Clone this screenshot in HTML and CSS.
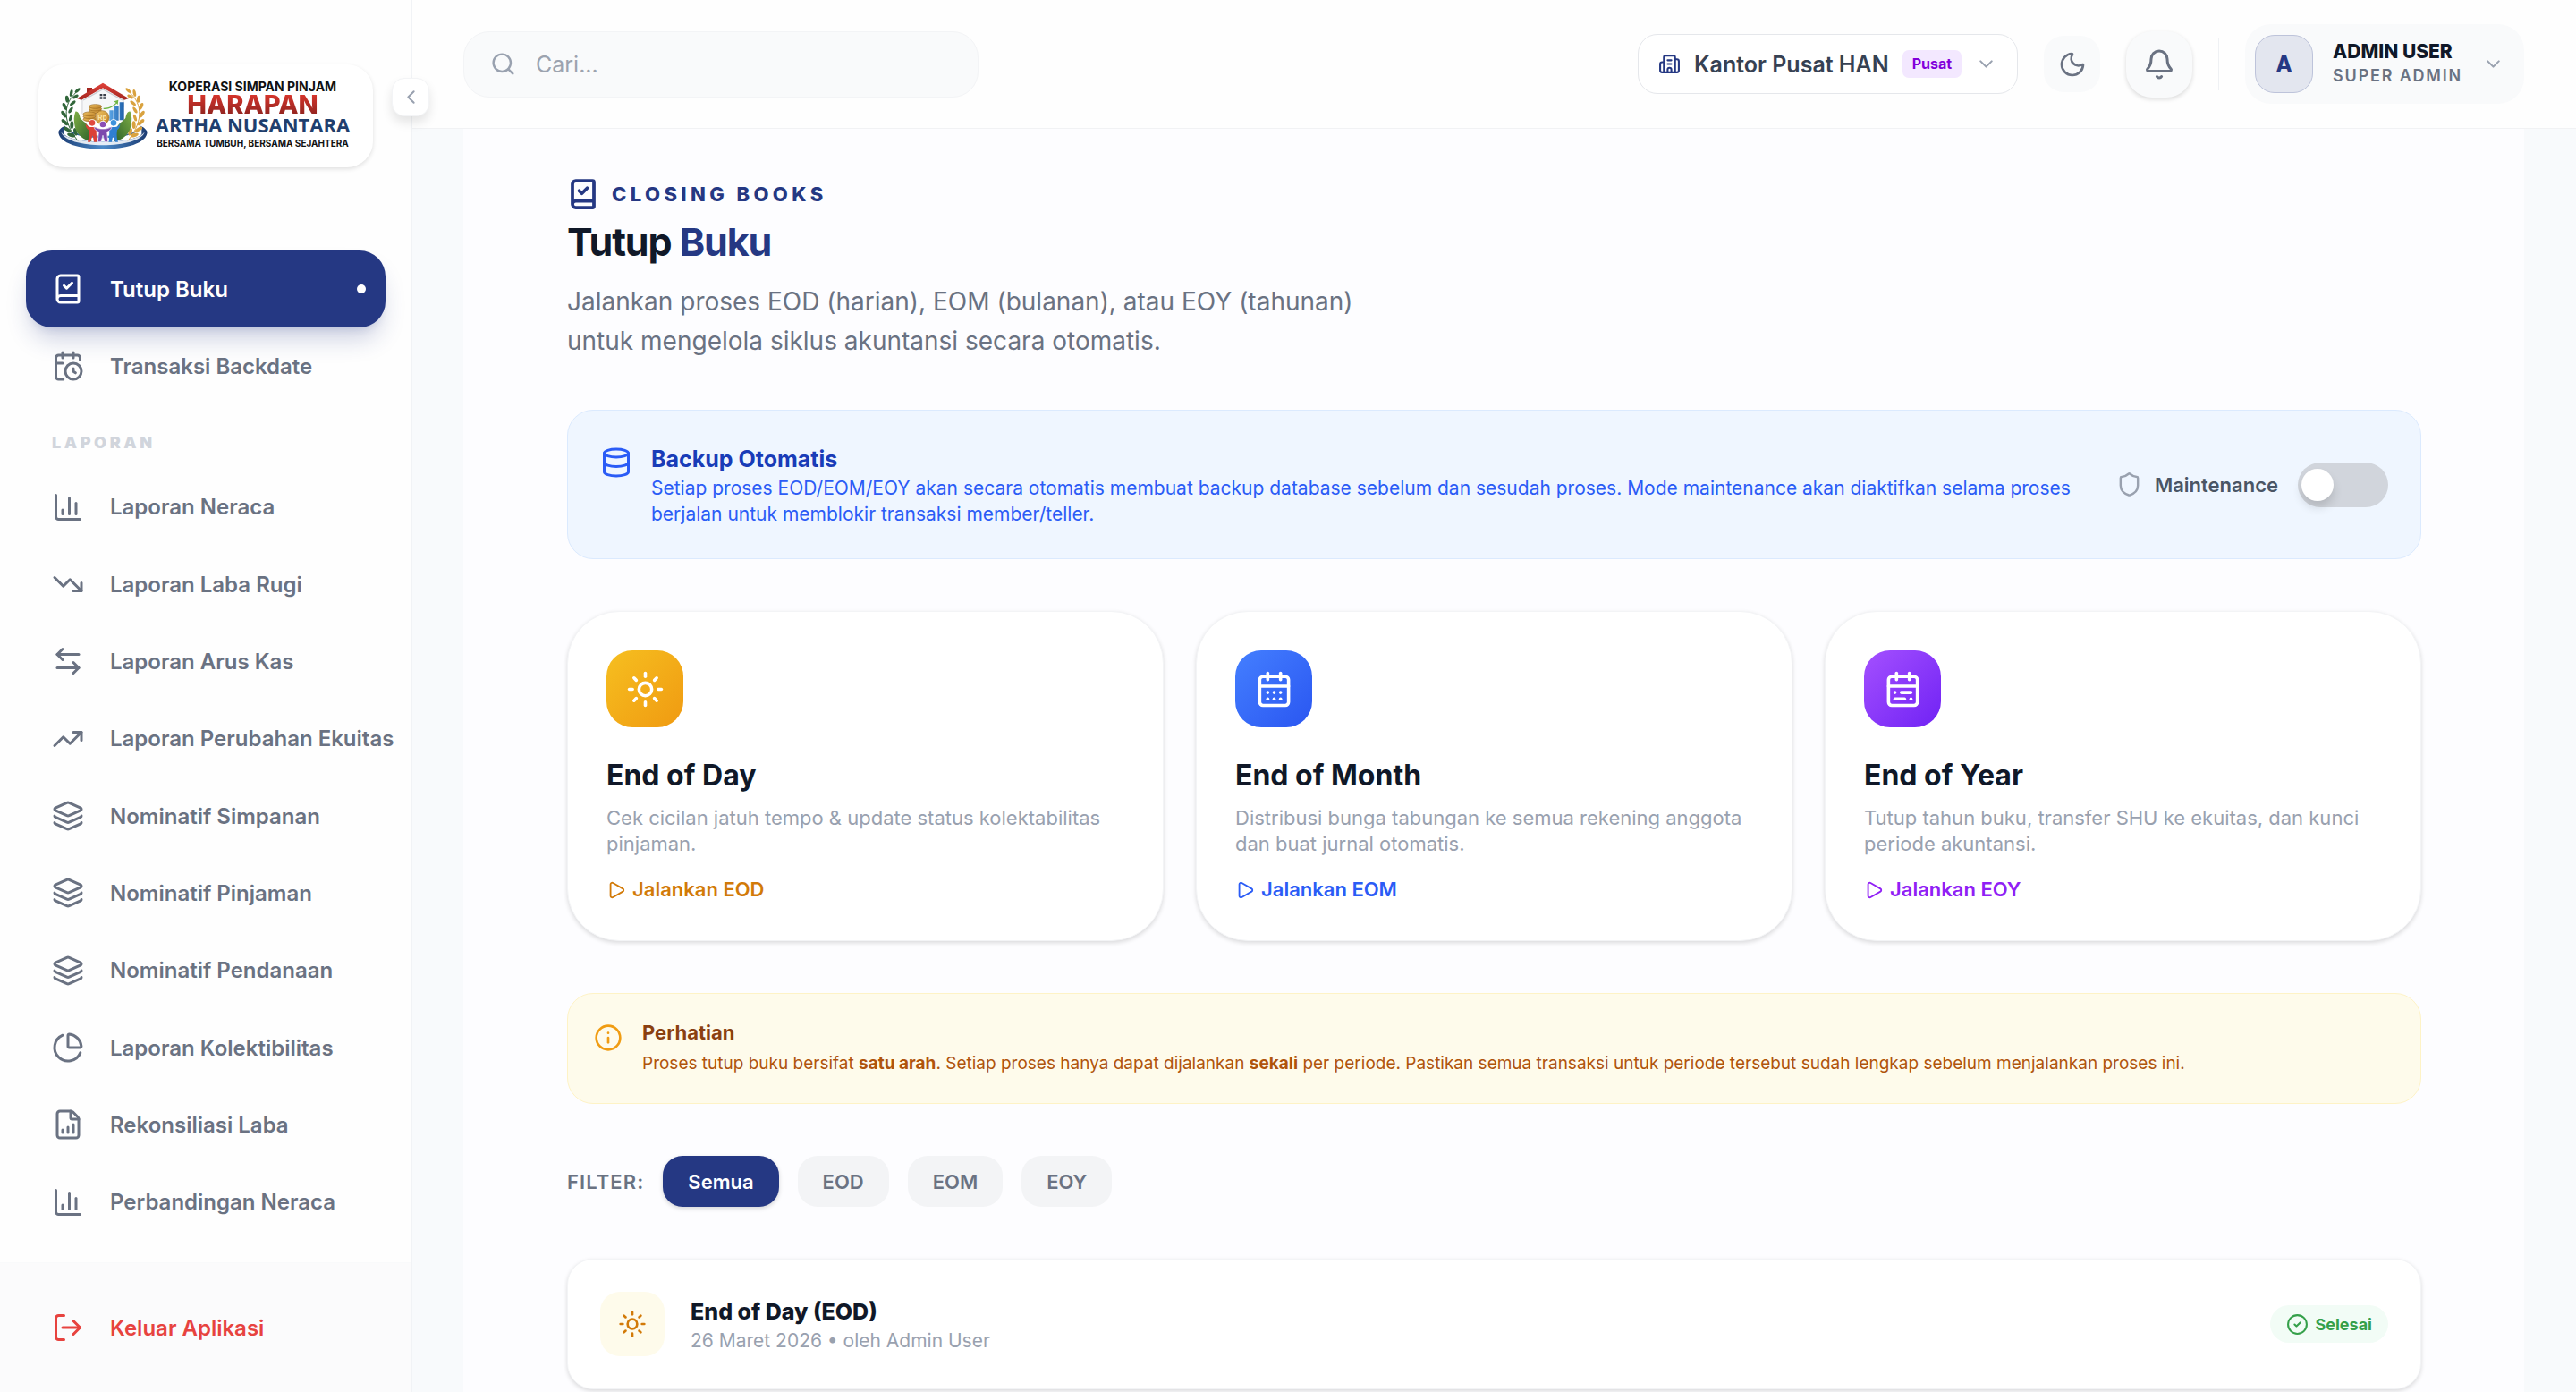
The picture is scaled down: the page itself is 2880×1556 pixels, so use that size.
FILE: index.html
```html
<!DOCTYPE html>
<html lang="id">
<head>
    <meta charset="UTF-8">
    <meta name="viewport" content="width=device-width, initial-scale=1.0">
    <title>Tutup Buku - Harapan Artha Nusantara</title>
    <link rel="stylesheet" href="styles.css">
</head>
<body>
    <!-- Icon sprite -->
    <svg class="sprite" aria-hidden="true">
        <symbol id="i-book" viewBox="0 0 24 24"><path d="M4 19.5v-15A2.5 2.5 0 0 1 6.500 2H19a1 1 0 0 1 1 1v18a1 1 0 0 1-1 1H6.500a1 1 0 0 1 0-5H20"/><path d="m9 9.500 2 2 4-4"/></symbol>
        <symbol id="i-calendar-clock" viewBox="0 0 24 24"><path d="M16 14v2.200l1.600 1"/><path d="M16 2v4"/><path d="M21 7.500V6a2 2 0 0 0-2-2H5a2 2 0 0 0-2 2v14a2 2 0 0 0 2 2h3.500"/><path d="M3 10h5"/><path d="M8 2v4"/><circle cx="16" cy="16" r="6"/></symbol>
        <symbol id="i-chart" viewBox="0 0 24 24"><path d="M3 3v16a2 2 0 0 0 2 2h16"/><path d="M18 17V9"/><path d="M13 17V5"/><path d="M8 17v-3"/></symbol>
        <symbol id="i-down" viewBox="0 0 24 24"><path d="M16 17h6v-6"/><path d="m22 17-8.500-8.500-5 5L2 7"/></symbol>
        <symbol id="i-up" viewBox="0 0 24 24"><path d="M16 7h6v6"/><path d="m22 7-8.500 8.500-5-5L2 17"/></symbol>
        <symbol id="i-swap" viewBox="0 0 24 24"><path d="M8 3 4 7l4 4"/><path d="M4 7h16"/><path d="m16 21 4-4-4-4"/><path d="M20 17H4"/></symbol>
        <symbol id="i-layers" viewBox="0 0 24 24"><path d="M12.830 2.180a2 2 0 0 0-1.660 0L2.600 6.080a1 1 0 0 0 0 1.830l8.580 3.910a2 2 0 0 0 1.660 0l8.580-3.900a1 1 0 0 0 0-1.830z"/><path d="M2 12a1 1 0 0 0 .58.910l8.600 3.910a2 2 0 0 0 1.650 0l8.580-3.900A1 1 0 0 0 22 12"/><path d="M2 17a1 1 0 0 0 .58.910l8.600 3.910a2 2 0 0 0 1.650 0l8.580-3.900A1 1 0 0 0 22 17"/></symbol>
        <symbol id="i-pie" viewBox="0 0 24 24"><path d="M21 12c.552 0 1.005-.449.950-.998a10 10 0 0 0-8.953-8.951c-.550-.055-.998.398-.998.950v8a1 1 0 0 0 1 1z"/><path d="M21.210 15.890A10 10 0 1 1 8 2.830"/></symbol>
        <symbol id="i-file-chart" viewBox="0 0 24 24"><path d="M6 22a2 2 0 0 1-2-2V4a2 2 0 0 1 2-2h8a2.400 2.400 0 0 1 1.704.706l3.588 3.588A2.400 2.400 0 0 1 20 8v12a2 2 0 0 1-2 2z"/><path d="M14 2v5a1 1 0 0 0 1 1h5"/><path d="M8 18v-2"/><path d="M12 18v-4"/><path d="M16 18v-6"/></symbol>
        <symbol id="i-logout" viewBox="0 0 24 24"><path d="m16 17 5-5-5-5"/><path d="M21 12H8"/><path d="M9 21H5a2 2 0 0 1-2-2V5a2 2 0 0 1 2-2h4"/></symbol>
        <symbol id="i-left" viewBox="0 0 24 24"><path d="m15 18-6-6 6-6"/></symbol>
        <symbol id="i-chevron" viewBox="0 0 24 24"><path d="m6 9 6 6 6-6"/></symbol>
        <symbol id="i-search" viewBox="0 0 24 24"><path d="m21 21-4.340-4.340"/><circle cx="11" cy="11" r="8"/></symbol>
        <symbol id="i-building" viewBox="0 0 24 24"><path d="M10 12h4"/><path d="M10 8h4"/><path d="M14 21v-3a2 2 0 0 0-4 0v3"/><path d="M6 10H4a2 2 0 0 0-2 2v7a2 2 0 0 0 2 2h16a2 2 0 0 0 2-2V9a2 2 0 0 0-2-2h-2"/><path d="M6 21V5a2 2 0 0 1 2-2h8a2 2 0 0 1 2 2v16"/></symbol>
        <symbol id="i-moon" viewBox="0 0 24 24"><path d="M20.985 12.486a9 9 0 1 1-9.473-9.472c.405-.022.617.460.402.803a6 6 0 0 0 8.268 8.268c.344-.215.825-.004.803.401"/></symbol>
        <symbol id="i-bell" viewBox="0 0 24 24"><path d="M10.268 21a2 2 0 0 0 3.464 0"/><path d="M3.262 15.326A1 1 0 0 0 4 17h16a1 1 0 0 0 .740-1.673C19.410 13.956 18 12.499 18 8A6 6 0 0 0 6 8c0 4.499-1.411 5.956-2.738 7.326"/></symbol>
        <symbol id="i-database" viewBox="0 0 24 24"><ellipse cx="12" cy="5" rx="9" ry="3"/><path d="M3 5v14a9 3 0 0 0 18 0V5"/><path d="M3 12a9 3 0 0 0 18 0"/></symbol>
        <symbol id="i-shield" viewBox="0 0 24 24"><path d="M20 13c0 5-3.500 7.500-7.660 8.950a1 1 0 0 1-.670-.010C7.500 20.500 4 18 4 13V6a1 1 0 0 1 1-1c2 0 4.500-1.200 6.240-2.720a1.170 1.170 0 0 1 1.520 0C14.510 3.810 17 5 19 5a1 1 0 0 1 1 1z"/></symbol>
        <symbol id="i-sun" viewBox="0 0 24 24"><circle cx="12" cy="12" r="4"/><path d="M12 2v2"/><path d="M12 20v2"/><path d="m4.930 4.930 1.410 1.410"/><path d="m17.660 17.660 1.410 1.410"/><path d="M2 12h2"/><path d="M20 12h2"/><path d="m6.340 17.660-1.410 1.410"/><path d="m19.070 4.930-1.410 1.410"/></symbol>
        <symbol id="i-calendar-days" viewBox="0 0 24 24"><path d="M8 2v4"/><path d="M16 2v4"/><rect width="18" height="18" x="3" y="4" rx="2"/><path d="M3 10h18"/><path d="M8 14h.010"/><path d="M12 14h.010"/><path d="M16 14h.010"/><path d="M8 18h.010"/><path d="M12 18h.010"/><path d="M16 18h.010"/></symbol>
        <symbol id="i-calendar-range" viewBox="0 0 24 24"><rect width="18" height="18" x="3" y="4" rx="2"/><path d="M16 2v4"/><path d="M3 10h18"/><path d="M8 2v4"/><path d="M17 14h-6"/><path d="M13 18H7"/><path d="M7 14h.010"/><path d="M17 18h.010"/></symbol>
        <symbol id="i-play" viewBox="0 0 24 24"><path d="M5 5a2 2 0 0 1 3.008-1.728l11.997 6.998a2 2 0 0 1 .003 3.458l-12 7A2 2 0 0 1 5 19z"/></symbol>
        <symbol id="i-info" viewBox="0 0 24 24"><circle cx="12" cy="12" r="10"/><path d="M12 16v-4"/><path d="M12 8h.010"/></symbol>
        <symbol id="i-check" viewBox="0 0 24 24"><circle cx="12" cy="12" r="10"/><path d="m9 12 2 2 4-4"/></symbol>
        <symbol id="laurel" viewBox="77 66 298 228" overflow="visible">
            <path d="M146 92C96 128 84 190 142 262" fill="none" stroke="currentColor" stroke-width="3"/>
            <g fill="currentColor">
                <ellipse cx="141" cy="93" rx="11" ry="5" transform="rotate(-42 141 93)"/>
                <ellipse cx="120" cy="102" rx="12" ry="5" transform="rotate(-78 120 102)"/>
                <ellipse cx="134" cy="114" rx="11" ry="5" transform="rotate(-30 134 114)"/>
                <ellipse cx="106" cy="122" rx="12" ry="6" transform="rotate(-98 106 122)"/>
                <ellipse cx="125" cy="136" rx="12" ry="5" transform="rotate(-42 125 136)"/>
                <ellipse cx="98" cy="147" rx="13" ry="6" transform="rotate(65 98 147)"/>
                <ellipse cx="118" cy="159" rx="12" ry="5" transform="rotate(-58 118 159)"/>
                <ellipse cx="95" cy="173" rx="13" ry="6" transform="rotate(55 95 173)"/>
                <ellipse cx="118" cy="185" rx="12" ry="5" transform="rotate(-72 118 185)"/>
                <ellipse cx="98" cy="200" rx="14" ry="6" transform="rotate(44 98 200)"/>
                <ellipse cx="122" cy="209" rx="13" ry="6" transform="rotate(-88 122 209)"/>
                <ellipse cx="106" cy="224" rx="14" ry="6" transform="rotate(32 106 224)"/>
                <ellipse cx="134" cy="232" rx="13" ry="6" transform="rotate(75 134 232)"/>
                <ellipse cx="120" cy="243" rx="14" ry="6" transform="rotate(20 120 243)"/>
            </g>
        </symbol>
    </svg>

    <div class="app">
        <aside class="sidebar">
            <div class="brand">
                <svg class="emblem" viewBox="77 66 298 228" role="img" aria-label="Logo koperasi">
                    <defs>
                        <linearGradient id="g-roof" x1="0" y1="0" x2="0" y2="1"><stop offset="0" stop-color="#e0413a"/><stop offset="1" stop-color="#a32620"/></linearGradient>
                        <linearGradient id="g-base" x1="0" y1="0" x2="1" y2="0"><stop offset="0" stop-color="#1c3c73"/><stop offset=".5" stop-color="#4a8ac9"/><stop offset="1" stop-color="#1c3c73"/></linearGradient>
                        <linearGradient id="g-coin" x1="0" y1="0" x2="1" y2="1"><stop offset="0" stop-color="#f3c766"/><stop offset="1" stop-color="#b87a22"/></linearGradient>
                        <linearGradient id="g-bar" x1="0" y1="0" x2="1" y2="0"><stop offset="0" stop-color="#5aa5e6"/><stop offset="1" stop-color="#1d5ea8"/></linearGradient>
                        <linearGradient id="g-hand" x1="0" y1="0" x2="1" y2="1"><stop offset="0" stop-color="#7fae45"/><stop offset="1" stop-color="#2c6129"/></linearGradient>
                    </defs>
                    <path d="M77 232c0 78 298 78 298 0-6-14-22-20-22-20 10 44-254 44-254 0 0 0-18 6-22 20z" fill="url(#g-base)"/>
                    <path d="M86 230c14 48 266 48 280 0-8 62-272 62-280 0z" fill="#fff" opacity=".85"/>
                    <path d="M96 214c14 52 246 52 260 0v26c-30 34-230 34-260 0z" fill="#fff"/>
                    <use href="#laurel" x="77" y="66" width="298" height="228" color="#31663a"/>
                    <g transform="translate(452 0) scale(-1 1)"><use href="#laurel" x="77" y="66" width="298" height="228" color="#d9a23f"/></g>
                    <path d="M158 120v52M294 120v30" stroke="#c9ccd1" stroke-width="5"/>
                    <path d="M158 122 226 86l68 36v50H158z" fill="#f6f7f8"/>
                    <path d="M172 102V84h18v14z" fill="#a32620"/>
                    <path d="m226 68 87 52-15 5-72-40-72 40-15-5z" fill="url(#g-roof)"/>
                    <path d="m226 89 66 37" stroke="#c9ccd1" stroke-width="4"/>
                    <path d="m226 89-66 37" stroke="#c9ccd1" stroke-width="4"/>
                    <path d="M216 105h8v7h-8zM227 105h8v7h-8zM216 115h8v7h-8zM227 115h8v7h-8z" fill="#3a3f48"/>
                    <path d="M248 160h13v35h-13zM265 146h14v48h-14zM282 133h15v60h-15z" fill="url(#g-bar)"/>
                    <path d="M228 152c20 0 32-8 42-17l-7-5 15-5-2 16-4-4c-12 12-26 19-44 19z" fill="#6fb544"/>
                    <g fill="url(#g-coin)" stroke="#9a6a1f" stroke-width="2">
                        <ellipse cx="201" cy="163" rx="21" ry="7"/>
                        <ellipse cx="201" cy="155" rx="21" ry="7"/>
                        <ellipse cx="201" cy="147" rx="21" ry="7"/>
                        <ellipse cx="181" cy="190" rx="21" ry="7"/>
                        <ellipse cx="181" cy="181" rx="21" ry="7"/>
                        <ellipse cx="181" cy="172" rx="21" ry="7"/>
                        <circle cx="224" cy="184" r="23"/>
                    </g>
                    <text class="emblem-rp" x="224" y="192" text-anchor="middle">Rp</text>
                    <path id="hand" d="M134 164c10-2 14 12 16 22 8 10 22 16 28 30l10 48c-26-2-50-22-56-50-4-20-4-34 2-50z" fill="url(#g-hand)"/>
                    <use href="#hand" transform="translate(452 0) scale(-1 1)"/>
                    <g fill="#fff"><circle cx="190" cy="202" r="12"/><circle cx="262" cy="202" r="12"/><circle cx="226" cy="207" r="12"/></g>
                    <circle cx="190" cy="202" r="10" fill="#e0483f"/>
                    <path d="M168 204c8 14 18 12 30 12l14 4-8 12 2 34h-10l-4-22-8 22h-9c6-18 4-30 3-40-8-6-10-14-10-22z" fill="#dc4037"/>
                    <circle cx="262" cy="202" r="10" fill="#3f93dc"/>
                    <path d="M284 204c-8 14-18 12-30 12l-14 4 8 12-2 34h10l4-22 8 22h9c-6-18-4-30-3-40 8-6 10-14 10-22z" fill="#2f7fd0"/>
                    <circle cx="226" cy="207" r="10" fill="#8a4fb5"/>
                    <path d="M196 214c12 8 20 8 30 8s18 0 30-8c-2 12-10 16-16 18l3 34h-11l-6-22-6 22h-11l3-34c-6-2-14-6-16-18z" fill="#7d49ad" stroke="#fff" stroke-width="2"/>
                </svg>
                <div class="brand-text">
                    <span class="brand-top">KOPERASI SIMPAN PINJAM</span>
                    <span class="brand-name">HARAPAN</span>
                    <span class="brand-sub">ARTHA NUSANTARA</span>
                    <span class="brand-tag">BERSAMA TUMBUH, BERSAMA SEJAHTERA</span>
                </div>
            </div>
            <button class="collapse" type="button" aria-label="Ciutkan menu"><svg class="icon icon-sm"><use href="#i-left"/></svg></button>

            <nav class="nav">
                <a class="nav-item active" href="#"><svg class="icon icon-lg"><use href="#i-book"/></svg>Tutup Buku<span class="dot"></span></a>
                <a class="nav-item" href="#"><svg class="icon icon-lg"><use href="#i-calendar-clock"/></svg>Transaksi Backdate</a>
                <h2 class="nav-title">LAPORAN</h2>
                <a class="nav-item" href="#"><svg class="icon icon-lg"><use href="#i-chart"/></svg>Laporan Neraca</a>
                <a class="nav-item" href="#"><svg class="icon icon-lg"><use href="#i-down"/></svg>Laporan Laba Rugi</a>
                <a class="nav-item" href="#"><svg class="icon icon-lg"><use href="#i-swap"/></svg>Laporan Arus Kas</a>
                <a class="nav-item" href="#"><svg class="icon icon-lg"><use href="#i-up"/></svg>Laporan Perubahan Ekuitas</a>
                <a class="nav-item" href="#"><svg class="icon icon-lg"><use href="#i-layers"/></svg>Nominatif Simpanan</a>
                <a class="nav-item" href="#"><svg class="icon icon-lg"><use href="#i-layers"/></svg>Nominatif Pinjaman</a>
                <a class="nav-item" href="#"><svg class="icon icon-lg"><use href="#i-layers"/></svg>Nominatif Pendanaan</a>
                <a class="nav-item" href="#"><svg class="icon icon-lg"><use href="#i-pie"/></svg>Laporan Kolektibilitas</a>
                <a class="nav-item" href="#"><svg class="icon icon-lg"><use href="#i-file-chart"/></svg>Rekonsiliasi Laba</a>
                <a class="nav-item" href="#"><svg class="icon icon-lg"><use href="#i-chart"/></svg>Perbandingan Neraca</a>
            </nav>

            <div class="sidebar-footer">
                <button class="nav-item logout" type="button"><svg class="icon icon-lg"><use href="#i-logout"/></svg>Keluar Aplikasi</button>
            </div>
        </aside>

        <div class="page">
            <header class="topbar">
                <label class="search">
                    <svg class="icon icon-md"><use href="#i-search"/></svg>
                    <input type="search" placeholder="Cari..." aria-label="Cari">
                </label>
                <div class="topbar-right">
                    <button class="branch" type="button">
                        <svg class="icon icon-sm"><use href="#i-building"/></svg>
                        <span>Kantor Pusat HAN</span>
                        <span class="branch-tag">Pusat</span>
                        <svg class="icon icon-sm muted"><use href="#i-chevron"/></svg>
                    </button>
                    <button class="theme" type="button" aria-label="Mode gelap"><svg class="icon icon-info"><use href="#i-moon"/></svg></button>
                    <button class="bell" type="button" aria-label="Notifikasi"><svg class="icon icon-lg"><use href="#i-bell"/></svg></button>
                    <span class="divider"></span>
                    <button class="user" type="button">
                        <span class="avatar">A</span>
                        <span class="user-text">
                            <span class="user-name">ADMIN USER</span>
                            <span class="user-role">SUPER ADMIN</span>
                        </span>
                        <svg class="icon icon-sm muted"><use href="#i-chevron"/></svg>
                    </button>
                </div>
            </header>

            <main class="main">
                <div class="content">
                    <div class="eyebrow"><svg class="icon icon-lg bold"><use href="#i-book"/></svg>CLOSING BOOKS</div>
                    <h1>Tutup <span>Buku</span></h1>
                    <p class="lead">Jalankan proses EOD (harian), EOM (bulanan), atau EOY (tahunan) untuk mengelola siklus akuntansi secara otomatis.</p>

                    <section class="backup">
                        <svg class="icon icon-lg"><use href="#i-database"/></svg>
                        <div class="backup-text">
                            <h2>Backup Otomatis</h2>
                            <p>Setiap proses EOD/EOM/EOY akan secara otomatis membuat backup database sebelum dan sesudah proses. Mode maintenance akan diaktifkan selama proses berjalan untuk memblokir transaksi member/teller.</p>
                        </div>
                        <div class="maintenance">
                            <svg class="icon icon-md muted"><use href="#i-shield"/></svg>
                            <label for="maintenance">Maintenance</label>
                            <input class="toggle" type="checkbox" id="maintenance">
                        </div>
                    </section>

                    <section class="cards">
                        <article class="card">
                            <div class="card-icon amber"><svg class="icon icon-xl"><use href="#i-sun"/></svg></div>
                            <h3>End of Day</h3>
                            <p>Cek cicilan jatuh tempo &amp; update status kolektabilitas pinjaman.</p>
                            <button class="run run-amber" type="button"><svg class="icon icon-xs"><use href="#i-play"/></svg>Jalankan EOD</button>
                        </article>
                        <article class="card">
                            <div class="card-icon blue"><svg class="icon icon-xl"><use href="#i-calendar-days"/></svg></div>
                            <h3>End of Month</h3>
                            <p>Distribusi bunga tabungan ke semua rekening anggota dan buat jurnal otomatis.</p>
                            <button class="run run-blue" type="button"><svg class="icon icon-xs"><use href="#i-play"/></svg>Jalankan EOM</button>
                        </article>
                        <article class="card">
                            <div class="card-icon purple"><svg class="icon icon-xl"><use href="#i-calendar-range"/></svg></div>
                            <h3>End of Year</h3>
                            <p>Tutup tahun buku, transfer SHU ke ekuitas, dan kunci periode akuntansi.</p>
                            <button class="run run-purple" type="button"><svg class="icon icon-xs"><use href="#i-play"/></svg>Jalankan EOY</button>
                        </article>
                    </section>

                    <section class="warning">
                        <svg class="icon icon-info"><use href="#i-info"/></svg>
                        <div>
                            <h2>Perhatian</h2>
                            <p>Proses tutup buku bersifat <strong>satu arah</strong>. Setiap proses hanya dapat dijalankan <strong>sekali</strong> per periode. Pastikan semua transaksi untuk periode tersebut sudah lengkap sebelum menjalankan proses ini.</p>
                        </div>
                    </section>

                    <div class="filters">
                        <span class="filter-label">FILTER:</span>
                        <button class="filter selected" type="button">Semua</button>
                        <button class="filter" type="button">EOD</button>
                        <button class="filter" type="button">EOM</button>
                        <button class="filter" type="button">EOY</button>
                    </div>

                    <article class="history">
                        <div class="history-icon"><svg class="icon icon-info"><use href="#i-sun"/></svg></div>
                        <div class="history-text">
                            <h3>End of Day (EOD)</h3>
                            <p>26 Maret 2026 • oleh Admin User</p>
                        </div>
                        <span class="status"><svg class="icon icon-sm"><use href="#i-check"/></svg>Selesai</span>
                    </article>
                </div>
            </main>
        </div>
    </div>
</body>
</html>
```

FILE: styles.css
```css
* {
    box-sizing: border-box;
    margin: 0;
}
body {
    font-family: Inter, "Liberation Sans", sans-serif;
    font-size: 25px;
    color: #101828;
    background: #f8fafc;
}
button,
input {
    font: inherit;
    color: inherit;
    border: none;
    background: none;
    padding: 0;
}
button {
    cursor: pointer;
}
a {
    color: inherit;
    text-decoration: none;
}
h1, h2, h3 {
    font-size: inherit;
}
.sprite {
    position: absolute;
    width: 0;
    height: 0;
}

/* Icons */
.icon {
    flex: none;
    width: 36px;
    height: 36px;
    fill: none;
    stroke: currentColor;
    stroke-width: 2;
    stroke-linecap: round;
    stroke-linejoin: round;
}
.icon-xs { width: 22px; height: 22px; }
.icon-sm { width: 25px; height: 25px; }
.icon-md { width: 29px; height: 29px; }
.icon-info { width: 32px; height: 32px; }
.icon-xl { width: 43px; height: 43px; }
.muted { color: #99a1af; }
.bold { stroke-width: 2.5; }

.app {
    display: flex;
    height: 100vh;
    overflow: hidden;
}

/* Sidebar */
.sidebar {
    position: relative;
    z-index: 2;
    flex: none;
    display: flex;
    flex-direction: column;
    width: 461px;
    padding-top: 72px;
    background: #fefefe;
    border-right: 1px solid #f1f3f6;
}
.brand {
    display: flex;
    align-items: center;
    gap: 5px;
    height: 115px;
    margin: 0 43px;
    padding: 0 22px;
    background: #fff;
    border-radius: 29px;
    box-shadow: 0 2px 5px rgba(0, 0, 0, 0.12);
}
.emblem {
    flex: none;
    width: 100px;
    height: 76px;
}
.emblem-rp {
    font-size: 24px;
    font-weight: 700;
    fill: #fbe3a5;
}
.brand-text {
    flex: 1;
    display: flex;
    flex-direction: column;
    align-items: center;
    white-space: nowrap;
}
.brand-top {
    font-size: 14px;
    font-weight: 700;
    line-height: 16px;
    color: #111;
}
.brand-name {
    font-size: 29px;
    font-weight: 800;
    line-height: 24px;
    background: linear-gradient(#d8352c, #8f241f);
    background-clip: text;
    color: transparent;
}
.brand-sub {
    font-family: "Open Sans", sans-serif;
    font-size: 22px;
    font-weight: 700;
    line-height: 20px;
    color: #1f3f6e;
}
.brand-tag {
    font-size: 10px;
    font-weight: 700;
    line-height: 22px;
    color: #111;
}
.collapse {
    position: absolute;
    top: 87px;
    right: -20px;
    display: grid;
    place-items: center;
    width: 42px;
    height: 43px;
    color: #99a1af;
    background: #fff;
    border: 1px solid #f3f4f6;
    border-radius: 14px;
    box-shadow: 0 7px 12px rgba(0, 0, 0, 0.1);
}
.nav {
    flex: 1;
    display: flex;
    flex-direction: column;
    padding: 93px 29px 24px;
}
.nav-item {
    flex: 1;
    display: flex;
    align-items: center;
    gap: 29px;
    padding: 0 22px 0 29px;
    border-radius: 29px;
    font-size: 24px;
    font-weight: 600;
    color: #6a7282;
    white-space: nowrap;
}
.nav-item.active {
    color: #fff;
    background: #253883;
    box-shadow: 0 18px 27px -5px rgba(37, 56, 131, 0.22), 0 7px 11px -7px rgba(37, 56, 131, 0.2);
}
.dot {
    width: 10px;
    height: 10px;
    margin-left: auto;
    border-radius: 50%;
    background: #fff;
}
.nav-title {
    height: 71px;
    padding: 28px 29px 0;
    font-size: 18px;
    font-weight: 900;
    line-height: 27px;
    letter-spacing: 0.2em;
    color: #d1d5dc;
}
.sidebar-footer {
    height: 145px;
    padding: 29px;
    background: #fbfbfc;
    border-top: 1px solid #f9fafb;
}
.logout {
    width: 100%;
    height: 86px;
    color: #e7433f;
}

/* Header */
.page {
    flex: 1;
    display: flex;
    flex-direction: column;
    min-width: 0;
}
.topbar {
    flex: none;
    display: flex;
    align-items: center;
    justify-content: space-between;
    height: 144px;
    padding: 0 58px 0 57px;
    background: #fefefe;
    border-bottom: 1px solid #f1f2f4;
}
.search {
    display: flex;
    align-items: center;
    gap: 22px;
    width: 576px;
    height: 74px;
    padding: 0 29px;
    color: #99a1af;
    background: #f9fafb;
    border: 1px solid #f3f4f6;
    border-radius: 29px;
}
.search input {
    flex: 1;
    min-width: 0;
    outline: none;
}
.search input::placeholder {
    color: #9ca3af;
}
.topbar-right {
    display: flex;
    align-items: center;
    gap: 29px;
}
.branch {
    display: flex;
    align-items: center;
    gap: 15px;
    height: 67px;
    padding: 0 22px;
    font-weight: 600;
    color: #364153;
    background: #fff;
    border: 1px solid #e5e7eb;
    border-radius: 22px;
}
.branch .icon:first-child {
    color: #253883;
}
.branch-tag {
    padding: 0 11px;
    font-size: 16px;
    font-weight: 700;
    line-height: 31px;
    color: #8200db;
    background: #f3e8ff;
    border-radius: 7px;
}
.theme,
.bell {
    display: grid;
    place-items: center;
    width: 63px;
    height: 63px;
    color: #6a7282;
    background: #f9fafb;
    border-radius: 22px;
}
.bell {
    width: 74px;
    height: 74px;
    border-radius: 29px;
    box-shadow: 0 2px 5px rgba(0, 0, 0, 0.14);
}
.divider {
    width: 1px;
    height: 58px;
    background: #eff1f4;
}
.user {
    display: flex;
    align-items: center;
    gap: 22px;
    height: 89px;
    padding: 0 22px 0 11px;
    text-align: left;
    background: #f9fafb;
    border-radius: 29px;
}
.avatar {
    display: grid;
    place-items: center;
    width: 65px;
    height: 65px;
    font-weight: 700;
    color: #253883;
    background: #e3e6ef;
    border: 1px solid #bdc3da;
    border-radius: 22px;
}
.user-text {
    display: flex;
    flex-direction: column;
}
.user-name {
    font-size: 21px;
    font-weight: 800;
    line-height: 26px;
}
.user-role {
    font-size: 18px;
    font-weight: 600;
    line-height: 27px;
    letter-spacing: 0.1em;
    color: #6a7282;
}

/* Content */
.main {
    flex: 1;
    min-height: 0;
    padding: 0 58px 0 57px;
    overflow: hidden;
}
.content {
    min-height: 100%;
    padding: 55px 115px 58px 116px;
    background: #fdfdff;
}
.eyebrow {
    display: flex;
    align-items: center;
    gap: 14px;
    font-size: 22px;
    font-weight: 800;
    line-height: 36px;
    letter-spacing: 0.2em;
    color: #253883;
}
h1 {
    font-size: 43px;
    font-weight: 700;
    line-height: 54px;
    letter-spacing: -0.025em;
    margin-top: 8px;
}
h1 span {
    color: #253883;
}
.lead {
    max-width: 920px;
    margin-top: 18px;
    font-size: 28px;
    line-height: 44px;
    color: #6a7282;
}
.backup {
    display: flex;
    height: 167px;
    margin-top: 55px;
    padding: 36px;
    color: #2b5cf6;
    background: #eff6ff;
    border: 1px solid #dbeafe;
    border-radius: 29px;
}
.backup > .icon {
    margin: 4px 21px 0 0;
}
.backup-text {
    flex: 1;
}
.backup-text h2 {
    line-height: 36px;
    color: #193cb8;
}
.backup-text p {
    font-size: 21px;
    line-height: 29px;
}
.maintenance {
    display: flex;
    align-items: center;
    gap: 14px;
    margin-left: 43px;
    font-size: 22px;
    font-weight: 600;
    color: #4a5565;
}
.toggle {
    appearance: none;
    width: 101px;
    height: 50px;
    margin-left: 8px;
    padding: 7px 4px;
    border-radius: 25px;
    background: #d1d5dc;
    cursor: pointer;
}
.toggle::before {
    content: "";
    display: block;
    width: 36px;
    height: 36px;
    border-radius: 50%;
    background: #fff;
    box-shadow: 0 7px 11px rgba(0, 0, 0, 0.14);
}
.toggle:checked {
    background: #253883;
}
.toggle:checked::before {
    margin-left: auto;
}
.cards {
    display: grid;
    grid-template-columns: repeat(3, 1fr);
    gap: 36px;
    margin-top: 58px;
}
.card {
    padding: 43px;
    height: 369px;
    background: #fff;
    border: 1px solid #f3f4f6;
    border-radius: 58px;
    box-shadow: 0 2px 5px rgba(0, 0, 0, 0.14);
}
.card-icon {
    display: grid;
    place-items: center;
    width: 86px;
    height: 86px;
    border-radius: 29px;
    color: #fff;
}
.amber { background: linear-gradient(135deg, #f6bf20, #f09a11); }
.blue { background: linear-gradient(135deg, #447fff, #2a56f1); }
.purple { background: linear-gradient(135deg, #a450ff, #7022f4); }
.card h3 {
    margin-top: 29px;
    font-size: 32px;
    line-height: 50px;
}
.card p {
    margin-top: 8px;
    font-size: 22px;
    line-height: 29px;
    color: #99a1af;
}
.run {
    display: flex;
    align-items: center;
    gap: 7px;
    margin-top: 22px;
    font-size: 22px;
    font-weight: 600;
    line-height: 29px;
}
.run-amber { color: #d27a08; }
.run-blue { color: #2b5cf6; }
.run-purple { color: #9020f5; }
.warning {
    display: flex;
    gap: 22px;
    height: 124px;
    margin-top: 58px;
    padding: 29px;
    color: #f09c12;
    background: #fefbeb;
    border: 1px solid #fef3c6;
    border-radius: 29px;
}
.warning .icon {
    margin-top: 4px;
}
.warning h2 {
    font-size: 22px;
    line-height: 29px;
    color: #8a4010;
}
.warning p {
    margin-top: 4px;
    font-size: 19px;
    line-height: 32px;
    color: #b0540b;
}
.filters {
    display: flex;
    align-items: center;
    gap: 21px;
    margin-top: 58px;
    font-size: 22px;
    font-weight: 600;
    color: #6a7282;
}
.filter-label {
    letter-spacing: 0.05em;
}
.filter {
    height: 57px;
    padding: 0 28px;
    background: #f3f4f6;
    border-radius: 22px;
}
.filter.selected {
    color: #fff;
    background: #253883;
    box-shadow: 0 2px 5px rgba(0, 0, 0, 0.16);
}
.history {
    display: flex;
    align-items: center;
    gap: 29px;
    height: 146px;
    margin-top: 58px;
    padding: 36px;
    background: #fff;
    border: 1px solid #f3f4f6;
    border-radius: 29px;
    box-shadow: 0 2px 5px rgba(0, 0, 0, 0.14);
}
.history-icon {
    display: grid;
    place-items: center;
    width: 72px;
    height: 72px;
    color: #d27a08;
    background: #fefbeb;
    border-radius: 22px;
}
.history h3 {
    font-weight: 800;
    line-height: 36px;
}
.history p {
    font-size: 21px;
    line-height: 29px;
    color: #99a1af;
}
.status {
    display: flex;
    align-items: center;
    gap: 7px;
    height: 42px;
    margin-left: auto;
    padding: 0 18px;
    font-size: 18px;
    font-weight: 700;
    color: #35a04a;
    background: #f2fcf6;
    border-radius: 21px;
}
```
